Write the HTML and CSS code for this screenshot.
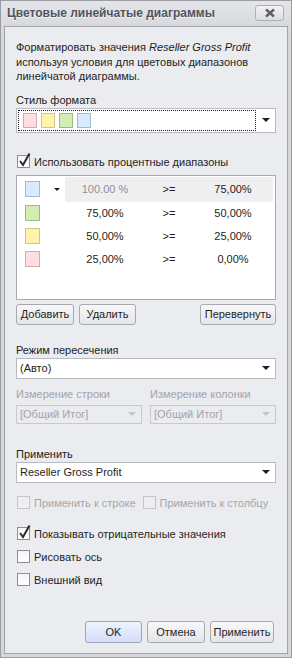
FILE: index.html
```html
<!DOCTYPE html>
<html lang="ru">
<head>
    <meta charset="UTF-8">
    <meta name="viewport" content="width=device-width, initial-scale=1.0">
    <title>Цветовые линейчатые диаграммы</title>
    <link rel="stylesheet" href="styles.css">
</head>
<body>

    <div class="window">
        <div class="titlebar">
            <span class="title">Цветовые линейчатые диаграммы</span>
            <button class="close-btn">
                <svg width="12" height="10" viewBox="0 0 12 10"><path d="M2 1.5 L10 8.5 M10 1.5 L2 8.5" stroke="#5b5e69" stroke-width="2.4" fill="none"/></svg>
            </button>
        </div>

        <div class="content">
            <p class="desc">Форматировать значения <i>Reseller Gross Profit</i><br>используя условия для цветовых диапазонов<br>линейчатой диаграммы.</p>

            <!-- Format style -->
            <div class="label label-style">Стиль формата</div>
            <div class="combo combo-style">
                <div class="focus-rect">
                    <span class="swatch pink"></span>
                    <span class="swatch yellow"></span>
                    <span class="swatch green"></span>
                    <span class="swatch blue"></span>
                </div>
                <span class="arrow"></span>
            </div>

            <div class="check check-percent">
                <span class="box"><svg width="15" height="15" viewBox="0 0 15 15"><path d="M3 8 L6 12 L12.5 0.5" stroke="#2b2b2b" stroke-width="2" fill="none"/></svg></span>
                Использовать процентные диапазоны
            </div>

            <!-- Ranges -->
            <div class="ranges">
                <div class="range-row first">
                    <span class="cell-swatch"><span class="swatch big blue"></span><span class="mini-arrow"></span></span>
                    <span class="cell-val muted selected">100.00 %</span>
                    <span class="cell-op selected">&gt;=</span>
                    <span class="cell-val selected">75,00%</span>
                </div>
                <div class="range-row">
                    <span class="cell-swatch"><span class="swatch big green"></span></span>
                    <span class="cell-val">75,00%</span>
                    <span class="cell-op">&gt;=</span>
                    <span class="cell-val">50,00%</span>
                </div>
                <div class="range-row">
                    <span class="cell-swatch"><span class="swatch big yellow"></span></span>
                    <span class="cell-val">50,00%</span>
                    <span class="cell-op">&gt;=</span>
                    <span class="cell-val">25,00%</span>
                </div>
                <div class="range-row">
                    <span class="cell-swatch"><span class="swatch big pink"></span></span>
                    <span class="cell-val">25,00%</span>
                    <span class="cell-op">&gt;=</span>
                    <span class="cell-val">0,00%</span>
                </div>
            </div>

            <div class="range-buttons">
                <button class="btn btn-add">Добавить</button>
                <button class="btn btn-del">Удалить</button>
                <button class="btn btn-flip">Перевернуть</button>
            </div>

            <!-- Intersection mode -->
            <div class="label label-mode">Режим пересечения</div>
            <div class="combo combo-small">
                <span class="combo-text">(Авто)</span>
                <span class="arrow"></span>
            </div>

            <div class="dims">
                <div class="dim">
                    <div class="label disabled">Измерение строки</div>
                    <div class="combo combo-disabled">
                        <span class="combo-text">[Общий Итог]</span>
                        <span class="arrow"></span>
                    </div>
                </div>
                <div class="dim">
                    <div class="label disabled">Измерение колонки</div>
                    <div class="combo combo-disabled">
                        <span class="combo-text">[Общий Итог]</span>
                        <span class="arrow"></span>
                    </div>
                </div>
            </div>

            <!-- Apply to -->
            <div class="label label-apply">Применить</div>
            <div class="combo combo-small">
                <span class="combo-text">Reseller Gross Profit</span>
                <span class="arrow"></span>
            </div>

            <div class="apply-checks">
                <div class="check disabled"><span class="box"></span>Применить к строке</div>
                <div class="check disabled"><span class="box"></span>Применить к столбцу</div>
            </div>

            <div class="check check-negative">
                <span class="box"><svg width="15" height="15" viewBox="0 0 15 15"><path d="M3 8 L6 12 L12.5 0.5" stroke="#2b2b2b" stroke-width="2" fill="none"/></svg></span>
                Показывать отрицательные значения
            </div>
            <div class="check check-plain"><span class="box"></span>Рисовать ось</div>
            <div class="check check-plain"><span class="box"></span>Внешний вид</div>

            <!-- Dialog buttons -->
            <div class="dialog-buttons">
                <button class="btn btn-ok">OK</button>
                <button class="btn btn-cancel">Отмена</button>
                <button class="btn btn-apply">Применить</button>
            </div>
        </div>
    </div>

</body>
</html>
```

FILE: styles.css
```css
/* Basic Reset */
* {
    margin: 0;
    padding: 0;
    box-sizing: border-box;
}

body {
    font-family: 'Liberation Sans', Arial, sans-serif;
    font-size: 11px;
    color: #1e1e1e;
    background: #d8d9de;
}

.window {
    width: 292px;
    height: 658px;
    border: 1px solid #9b9da5;
    background: linear-gradient(#e4e5e9, #d6d7dc 30px, #d6d7dc);
    padding: 0 3px 3px;
    display: flex;
    flex-direction: column;
}

.titlebar {
    height: 25px;
    display: flex;
    align-items: center;
    justify-content: space-between;
    padding: 0 3px 2px 3px;
}

.title {
    font-size: 12px;
    font-weight: bold;
    color: #50535e;
    text-shadow: 0 1px 0 #f4f4f6;
}

.close-btn {
    width: 29px;
    height: 16px;
    border: 1px solid #adafb6;
    border-radius: 3px;
    background: linear-gradient(#f2f2f5, #dcdde2);
    display: flex;
    align-items: center;
    justify-content: center;
    margin-right: 1px;
}

.content {
    flex: 1;
    border: 1px solid #a2a4ab;
    background: #ebecef;
    padding: 13px 11px 0 11px;
    display: flex;
    flex-direction: column;
}

.desc {
    line-height: 14.5px;
    color: #1e1e1e;
}

.label {
    line-height: 14px;
    color: #222;
}

.label.disabled {
    color: #a3a4a8;
}

.label-style {
    margin-top: 9px;
}

/* Combos */
.combo {
    height: 21px;
    background: #fff;
    border: 1px solid #b9bac0;
    display: flex;
    align-items: center;
    margin-top: 1px;
    position: relative;
}

.combo-text {
    flex: 1;
    padding-left: 3px;
    white-space: nowrap;
    overflow: hidden;
}

.arrow {
    width: 0;
    height: 0;
    border-left: 4px solid transparent;
    border-right: 4px solid transparent;
    border-top: 4px solid #1e1e1e;
    margin: 0 5px 0 6px;
}

.combo-style {
    height: 25px;
}

.focus-rect {
    flex: 1;
    height: 21px;
    margin-left: 1px;
    border: 1px dotted #1e1e1e;
    display: flex;
    align-items: center;
    gap: 4px;
    padding-left: 4px;
}

.swatch {
    width: 14px;
    height: 15px;
    border: 1px solid;
    display: inline-block;
}

.swatch.pink { background: #ffdde1; border-color: #d8a9ae; }
.swatch.yellow { background: #fff5a8; border-color: #d4c77d; }
.swatch.green { background: #d3eeb2; border-color: #9dbb80; }
.swatch.blue { background: #d8eafd; border-color: #a2b9d2; }

/* Checkboxes */
.check {
    display: flex;
    align-items: center;
    height: 16px;
    line-height: 16px;
    color: #1e1e1e;
}

.box {
    width: 13px;
    height: 13px;
    border: 1px solid #8e8f94;
    background: linear-gradient(#f4f4f4, #ffffff);
    margin: 0 4px 0 1px;
    position: relative;
    flex-shrink: 0;
}

.box svg {
    position: absolute;
    left: -1px;
    top: -3px;
}

.check.disabled {
    color: #a5a6aa;
}

.check.disabled .box {
    border-color: #c5c6ca;
    background: #eeeef0;
}

.check-percent {
    margin-top: 21px;
}

/* Ranges list */
.ranges {
    margin-top: 5px;
    height: 125px;
    border: 1px solid #a9aab0;
    background: #fff;
    padding-right: 1px;
}

.range-row {
    display: flex;
    height: 23px;
    align-items: center;
}

.range-row.first {
    height: 26px;
    padding-top: 1px;
}

.cell-swatch {
    width: 48px;
    height: 100%;
    display: flex;
    align-items: center;
    padding-left: 8px;
}

.swatch.big {
    width: 15px;
    height: 16px;
}

.mini-arrow {
    width: 0;
    height: 0;
    border-left: 3px solid transparent;
    border-right: 3px solid transparent;
    border-top: 3px solid #1e1e1e;
    margin-left: 14px;
}

.cell-val {
    width: 80px;
    height: 100%;
    display: flex;
    align-items: center;
    justify-content: center;
}

.cell-op {
    width: 48px;
    height: 100%;
    display: flex;
    align-items: center;
    justify-content: center;
}

.selected {
    background: #efeff1;
}

.muted {
    color: #8e8f94;
}

/* Buttons */
.btn {
    font-family: inherit;
    font-size: 11px;
    color: #1e1e1e;
    height: 21px;
    border: 1px solid #a9aab0;
    border-radius: 3px;
    background: linear-gradient(#f8f8fa, #e4e5e9);
}

.range-buttons {
    display: flex;
    gap: 5px;
    margin-top: 4px;
}

.btn-add { width: 58px; }
.btn-del { width: 57px; }
.btn-flip { width: 76px; margin-left: auto; }

.label-mode {
    margin-top: 18px;
}

.dims {
    display: flex;
    gap: 8px;
    margin-top: 8px;
}

.dim {
    flex: 1;
}

.combo-disabled {
    height: 19px;
    margin-top: 4px;
    background: #ebecef;
    border-color: #c8c9cd;
    color: #a3a4a8;
}

.combo-disabled .arrow {
    border-top-color: #c3c4c8;
}

.label-apply {
    margin-top: 23px;
}

.apply-checks {
    display: flex;
    gap: 6px;
    margin-top: 12px;
}

.check-negative {
    margin-top: 15px;
}

.check-plain {
    margin-top: 7px;
}

.dialog-buttons {
    display: flex;
    justify-content: flex-end;
    gap: 5px;
    margin-top: auto;
    margin-bottom: 10px;
    padding-right: 2px;
}

.btn-ok {
    width: 57px;
    height: 22px;
    background: linear-gradient(#eef2fd, #d3def9);
    border-color: #9ea5b8;
}

.btn-cancel { width: 58px; height: 22px; }
.btn-apply { width: 64px; height: 22px; }
```
